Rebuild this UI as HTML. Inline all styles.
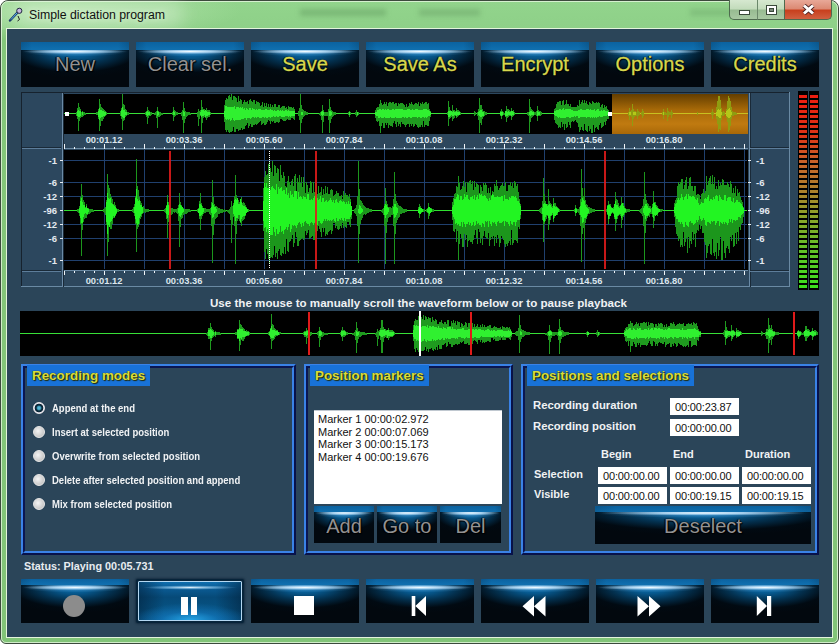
<!DOCTYPE html>
<html><head><meta charset="utf-8">
<style>
*{margin:0;padding:0;box-sizing:border-box}
html,body{width:839px;height:644px;overflow:hidden;background:#fff}
body{position:relative;font-family:"Liberation Sans",sans-serif}
.abs{position:absolute}
#frame{left:0;top:0;width:839px;height:644px;border:1px solid #3c4a3c;border-radius:8px 8px 6px 6px;
 background:radial-gradient(180px 30px at 60px 10px,rgba(190,232,182,.8),rgba(190,232,182,0)),linear-gradient(#92d48c 0,#8ed088 28px,#84c67a 29px,#82c478 100%)}
#frame:before{content:"";position:absolute;left:0;top:0;right:0;bottom:0;border:1px solid rgba(235,250,230,.75);border-radius:7px 7px 5px 5px}
#content{left:7px;top:29px;width:825px;height:608px;background:#2b4559;outline:1px solid #e4f4dc}
#title{left:29px;top:7.5px;font-size:12.3px;color:#111;white-space:nowrap;text-shadow:0 0 6px rgba(230,255,225,.9)}
.wb{top:0;height:20px;border:1px solid #4e6a4e;border-top:none}
#bmin{left:729px;width:29px;border-radius:0 0 0 5px;background:linear-gradient(#d6e8d0 0%,#c3dcbc 45%,#98bc92 55%,#a8c8a2 100%)}
#bmax{left:757px;width:28px;border-left:1px solid #6a886a;background:linear-gradient(#d6e8d0 0%,#c3dcbc 45%,#98bc92 55%,#a8c8a2 100%)}
#bclose{left:784px;width:48px;border-radius:0 0 5px 0;background:linear-gradient(#e8a898 0%,#dc8a74 45%,#c8401e 55%,#d06040 100%)}
.btn{position:absolute;overflow:hidden;--hy:10px;--bh:8px;
 background:
  radial-gradient(48% 2.6px at 50% var(--hy), rgba(240,250,255,1) 0%, rgba(190,225,250,.85) 40%, rgba(60,140,210,0) 100%),
  radial-gradient(50% 5px at 50% var(--hy), rgba(120,190,240,.55) 0%, rgba(40,130,200,0) 100%),
  radial-gradient(72% 58% at 50% var(--hy), #0b70b0 0%, #075a90 22%, #03304e 50%, #010a12 80%, #02080e 100%);
 }
.btn:before{content:"";position:absolute;left:0;right:0;top:0;height:var(--bh,8px);background:linear-gradient(90deg,rgba(0,10,20,.15),rgba(0,0,0,0) 10%,rgba(0,0,0,0) 90%,rgba(0,10,20,.15)),linear-gradient(#0b62a0,#1070b0)}
.btn span{position:absolute;left:0;right:0;text-align:center;font-size:20px;color:#929292;text-shadow:0 0 1px #000,1px 1px 1px #000,-1px 0 1px #000}
.btn span.y{color:#d6d84e;-webkit-text-stroke:.3px #d6d84e}
.tb{top:42px;width:108px;height:45px;--hy:9.5px;--bh:7.5px}
.tb span{top:53px}
svg text{font-family:"Liberation Sans",sans-serif}
.grp{position:absolute;border:2px solid;border-color:#3a82e6 #08124a #08124a #3a82e6}
.grp:before{content:"";position:absolute;left:0;top:0;right:0;bottom:0;border:2px solid;border-color:#0a1652 #3a82e6 #3a82e6 #0a1652}
.gt{position:absolute;background:#1872d8;color:#d8dc3c;font-weight:bold;font-size:13.4px;white-space:nowrap;padding:3px 5px 0 5px;text-shadow:1px 1px 1px #202800,0 0 1px #303000}
.lbl{position:absolute;color:#f0f2f4;font-weight:bold;font-size:11px;white-space:nowrap}
.radio{position:absolute;width:12px;height:12px;border-radius:50%;background:radial-gradient(circle at 40% 40%,#f4f4f4,#c8c8c8 70%,#b0b0b0);border:1px solid #e8e8e8}
.radio.on{background:radial-gradient(circle at 50% 50%,#6ac8e0 0,#3898b8 1.8px,#0c2c3c 2.8px,#0a2636 4px,#ece6f2 4.7px)}
.tx{position:absolute;background:#fff;color:#111;font-size:11px;height:17px;width:69px;padding:3px 0 0 5px;white-space:nowrap;letter-spacing:-.15px}
</style></head><body>
<div id="frame" class="abs"></div>
<div class="abs" style="left:14px;top:1px;width:170px;height:26px;border-radius:13px;background:rgba(215,240,210,.45);filter:blur(8px)"></div>
<div class="abs" style="left:300px;top:9px;width:86px;height:7px;background:rgba(70,120,70,.28);filter:blur(2.5px)"></div>
<div class="abs" style="left:419px;top:9px;width:61px;height:7px;background:rgba(70,120,70,.25);filter:blur(2.5px)"></div>
<div class="abs" style="left:690px;top:9px;width:58px;height:7px;background:rgba(70,120,70,.2);filter:blur(2.5px)"></div>
<svg class="abs" style="left:8px;top:7px" width="16" height="16" viewBox="0 0 16 16">
 <path d="M2 13.5 L9.5 5.5" stroke="#1a3a6a" stroke-width="2.4" stroke-linecap="round"/>
 <path d="M3 12.5 L9 6" stroke="#58b0e8" stroke-width="1"/>
 <circle cx="11.3" cy="3.8" r="2.6" fill="#c8b8e0" stroke="#202840" stroke-width="1"/>
 <path d="M10 9 l1.5 3.5 l-2 1.5" stroke="#202020" stroke-width="1" fill="none"/>
</svg>
<div id="title" class="abs">Simple dictation program</div>
<div id="bmin" class="abs wb"><div class="abs" style="left:9px;top:10px;width:11px;height:5px;background:#fff;border:1px solid #3a4a3a"></div></div>
<div id="bmax" class="abs wb"><div class="abs" style="left:8px;top:5px;width:11px;height:10px;background:#fff;border:1px solid #3a4a3a"><div class="abs" style="left:2px;top:2px;width:5px;height:4px;background:#7a8a7a;border:1px solid #3a4a3a"></div></div></div>
<div id="bclose" class="abs wb"><svg class="abs" style="left:17px;top:4px" width="13" height="11" viewBox="0 0 13 11"><path d="M2 1.5L11 9.5M11 1.5L2 9.5" stroke="#4a2020" stroke-width="4.6"/><path d="M2 1.5L11 9.5M11 1.5L2 9.5" stroke="#fff" stroke-width="3"/></svg></div>

<div id="content" class="abs"></div>

<!-- top buttons -->
<div class="btn tb" style="left:21px"><span style="top:10.8px">New</span></div>
<div class="btn tb" style="left:136px"><span style="top:10.8px">Clear sel.</span></div>
<div class="btn tb" style="left:251px"><span class="y" style="top:10.8px">Save</span></div>
<div class="btn tb" style="left:366px"><span class="y" style="top:10.8px">Save As</span></div>
<div class="btn tb" style="left:481px"><span class="y" style="top:10.8px">Encrypt</span></div>
<div class="btn tb" style="left:596px"><span class="y" style="top:10.8px">Options</span></div>
<div class="btn tb" style="left:711px"><span class="y" style="top:10.8px">Credits</span></div>

<svg class="abs" style="left:0;top:0" width="839" height="644" viewBox="0 0 839 644" shape-rendering="crispEdges">
 <!-- waveform panel frame -->
 <rect x="21" y="92" width="769" height="195" fill="#2c475e"/>
 <path d="M21 92.5H790M21.5 92V287" stroke="#16222e" stroke-width="1"/>
 <path d="M21 286.5H790M789.5 92V287" stroke="#6a8aa4" stroke-width="1"/>
 <path d="M62.5 93V287M749.5 93V287" stroke="#6a8aa6" stroke-width="1"/><path d="M63.5 93V287M750.5 93V287" stroke="#1a2a38" stroke-width="1"/>
 <path d="M22 148.5H61M22 271.5H61M750 148.5H789M750 271.5H789" stroke="#5d7d9a" stroke-width="1"/>
 <path d="M22 147.5H61M22 270.5H61M750 147.5H789M750 270.5H789" stroke="#1a2a38" stroke-width="1"/>
 <!-- overview -->
 <rect x="64" y="94" width="684" height="40" fill="#000"/>
 <path d="M64 113.5H612" stroke="#38e038" stroke-width="1"/>
 <path d="M76.5 112V116M77.5 108V119M78.5 103V131M79.5 107V121M80.5 109V118M81.5 112V117M82.5 111V117M83.5 112V116M84.5 112V115M85.5 113V115M96.5 112V115M97.5 112V115M98.5 109V119M99.5 99V131M100.5 104V126M101.5 107V121M102.5 108V121M103.5 109V119M104.5 110V117M105.5 111V116M106.5 112V115M120.5 111V116M121.5 108V119M122.5 94V130M123.5 104V121M124.5 105V120M125.5 109V117M126.5 110V116M127.5 112V115M128.5 112V115M145.5 112V115M146.5 111V117M147.5 107V124M148.5 110V118M149.5 111V116M150.5 112V116M151.5 112V115M154.5 113V115M155.5 112V115M156.5 111V118M157.5 107V128M158.5 111V117M159.5 112V117M160.5 112V116M161.5 113V115M162.5 113V115M172.5 112V115M173.5 107V121M174.5 110V117M175.5 111V116M176.5 112V115M177.5 112V115M181.5 112V116M182.5 110V120M183.5 102V133M184.5 108V123M185.5 111V119M186.5 112V117M187.5 112V116M188.5 112V115M189.5 112V115M190.5 113V115M197.5 112V117M198.5 109V126M199.5 111V119M200.5 110V116M201.5 100V133M202.5 107V123M203.5 109V118M204.5 109V117M205.5 110V118M206.5 108V120M207.5 110V118M208.5 110V117M209.5 110V117M210.5 112V115M224.5 105V122M225.5 100V130M226.5 98V132M227.5 99V130M228.5 96V132M229.5 95V133M230.5 97V132M231.5 94V132M232.5 100V131M233.5 96V127M234.5 96V132M235.5 97V132M236.5 98V129M237.5 102V129M238.5 96V131M239.5 101V130M240.5 99V130M241.5 100V128M242.5 104V130M243.5 102V129M244.5 100V129M245.5 102V126M246.5 102V125M247.5 101V123M248.5 104V128M249.5 100V126M250.5 99V124M251.5 101V127M252.5 102V127M253.5 100V125M254.5 100V125M255.5 104V124M256.5 101V125M257.5 102V124M258.5 102V123M259.5 103V122M260.5 106V121M261.5 105V125M262.5 102V124M263.5 107V123M264.5 103V125M265.5 106V125M266.5 103V124M267.5 107V122M268.5 104V120M269.5 107V121M270.5 104V124M271.5 107V121M272.5 105V122M273.5 107V121M274.5 104V123M275.5 104V123M276.5 107V122M277.5 107V122M278.5 105V123M279.5 105V122M280.5 108V119M281.5 107V119M282.5 106V120M283.5 106V121M284.5 106V121M285.5 108V121M286.5 107V120M287.5 109V119M288.5 106V120M289.5 107V120M290.5 107V120M291.5 107V118M292.5 108V118M293.5 107V119M294.5 109V120M298.5 111V116M299.5 108V120M300.5 94V133M301.5 105V123M302.5 109V119M303.5 110V117M304.5 111V116M305.5 111V115M306.5 112V115M307.5 112V115M319.5 113V115M320.5 112V116M321.5 111V120M322.5 105V133M323.5 110V122M324.5 112V116M325.5 112V116M326.5 112V116M327.5 112V116M328.5 109V120M329.5 99V133M330.5 107V123M331.5 110V119M332.5 111V117M333.5 112V116M334.5 112V115M335.5 112V115M348.5 112V115M349.5 111V117M350.5 112V115M355.5 112V115M356.5 110V117M357.5 112V116M358.5 112V115M375.5 110V118M376.5 108V121M377.5 107V122M378.5 107V121M379.5 104V126M380.5 100V133M381.5 103V126M382.5 105V123M383.5 104V128M384.5 102V128M385.5 104V123M386.5 102V125M387.5 106V123M388.5 103V128M389.5 102V125M390.5 102V126M391.5 103V126M392.5 102V127M393.5 102V123M394.5 104V121M395.5 103V124M396.5 103V127M397.5 106V122M398.5 103V126M399.5 104V124M400.5 103V127M401.5 103V122M402.5 103V124M403.5 104V124M404.5 105V125M405.5 107V127M406.5 104V125M407.5 107V124M408.5 106V124M409.5 103V127M410.5 104V124M411.5 102V126M412.5 104V124M413.5 105V127M414.5 104V126M415.5 103V124M416.5 103V125M417.5 104V127M418.5 102V128M419.5 106V127M420.5 103V127M421.5 104V125M422.5 102V127M423.5 104V121M424.5 103V127M425.5 102V125M426.5 102V125M427.5 104V126M428.5 103V126M429.5 109V121M430.5 111V117M447.5 112V115M448.5 101V126M449.5 107V119M450.5 110V118M451.5 111V117M452.5 105V121M453.5 110V119M454.5 110V118M455.5 111V116M456.5 108V118M457.5 110V117M458.5 110V116M459.5 111V115M460.5 112V115M474.5 111V116M475.5 112V115M477.5 112V116M478.5 109V120M479.5 98V133M480.5 105V123M481.5 105V125M482.5 109V119M483.5 111V117M484.5 111V116M485.5 112V115M486.5 112V115M500.5 111V116M501.5 109V119M502.5 111V116M503.5 112V115M504.5 113V115M505.5 111V117M506.5 106V122M507.5 109V118M508.5 109V117M509.5 110V116M510.5 111V116M511.5 108V120M512.5 111V117M513.5 110V116M514.5 112V115M527.5 112V115M528.5 112V116M529.5 99V133M530.5 107V122M531.5 109V118M532.5 110V117M533.5 111V116M534.5 112V115M535.5 112V115M536.5 111V116M537.5 106V121M538.5 110V116M539.5 111V116M540.5 111V116M541.5 112V115M554.5 109V120M555.5 108V123M556.5 104V124M557.5 102V125M558.5 102V128M559.5 101V127M560.5 101V128M561.5 105V122M562.5 101V127M563.5 100V124M564.5 105V130M565.5 104V124M566.5 100V128M567.5 104V127M568.5 104V122M569.5 106V125M570.5 104V128M571.5 107V122M572.5 107V121M573.5 107V122M574.5 107V121M575.5 107V120M576.5 107V122M577.5 105V123M578.5 106V127M579.5 100V132M580.5 104V130M581.5 102V127M582.5 100V130M583.5 103V131M584.5 100V124M585.5 103V130M586.5 101V131M587.5 104V132M588.5 105V126M589.5 102V131M590.5 103V129M591.5 104V133M592.5 101V133M593.5 102V125M594.5 103V132M595.5 103V128M596.5 102V127M597.5 103V129M598.5 102V130M599.5 103V125M600.5 107V123M601.5 105V128M602.5 104V127M603.5 108V126M604.5 105V122M605.5 107V125M606.5 106V121M607.5 109V119M608.5 110V119M609.5 112V116" stroke="#1f9a1f" stroke-width="1"/>
 <path d="M77.5 111V116M78.5 110V117M79.5 111V117M80.5 111V116M82.5 112V115M98.5 111V117M99.5 108V120M100.5 110V118M101.5 110V117M102.5 111V117M103.5 111V116M104.5 112V116M105.5 112V115M121.5 110V116M122.5 107V117M123.5 110V118M124.5 110V118M125.5 112V115M126.5 112V115M146.5 112V115M147.5 111V116M148.5 112V115M149.5 112V115M157.5 111V116M158.5 112V115M173.5 111V115M174.5 112V115M183.5 111V116M184.5 112V116M200.5 112V115M201.5 110V117M202.5 110V116M203.5 110V116M204.5 111V115M205.5 110V117M206.5 111V116M207.5 112V116M208.5 112V115M209.5 112V115M224.5 111V117M225.5 106V119M226.5 106V120M227.5 107V119M228.5 107V120M229.5 107V119M230.5 107V121M231.5 107V120M232.5 107V118M233.5 107V120M234.5 106V121M235.5 109V120M236.5 107V120M237.5 107V120M238.5 107V120M239.5 108V120M240.5 107V120M241.5 108V119M242.5 107V119M243.5 109V119M244.5 108V118M245.5 110V118M246.5 108V120M247.5 109V118M248.5 110V118M249.5 108V118M250.5 108V119M251.5 110V118M252.5 108V117M253.5 109V117M254.5 109V118M255.5 110V117M256.5 109V118M257.5 110V117M258.5 109V117M259.5 109V118M260.5 109V118M261.5 110V118M262.5 110V117M263.5 110V117M264.5 110V118M265.5 109V117M266.5 109V118M267.5 110V118M268.5 110V117M269.5 110V117M270.5 109V118M271.5 110V117M272.5 110V117M273.5 111V116M274.5 110V117M275.5 111V117M276.5 111V116M277.5 110V117M278.5 110V117M279.5 111V116M280.5 110V116M281.5 111V117M282.5 110V117M283.5 111V117M284.5 111V117M285.5 110V116M286.5 110V116M287.5 111V116M288.5 110V117M289.5 111V116M290.5 111V117M291.5 111V116M292.5 111V116M293.5 111V116M294.5 111V116M301.5 112V115M302.5 112V115M321.5 112V115M322.5 111V116M323.5 112V115M329.5 111V116M330.5 111V116M331.5 112V115M349.5 112V115M357.5 112V115M375.5 112V115M376.5 112V116M377.5 110V116M378.5 110V118M379.5 109V118M380.5 109V117M381.5 110V118M382.5 109V118M383.5 109V118M384.5 110V117M385.5 109V118M386.5 110V118M387.5 109V118M388.5 109V118M389.5 110V118M390.5 110V117M391.5 110V118M392.5 109V118M393.5 109V118M394.5 110V118M395.5 109V117M396.5 109V118M397.5 109V118M398.5 109V118M399.5 109V118M400.5 109V118M401.5 109V118M402.5 109V117M403.5 110V117M404.5 110V118M405.5 110V117M406.5 110V118M407.5 109V118M408.5 109V117M409.5 109V117M410.5 110V118M411.5 110V118M412.5 109V117M413.5 110V117M414.5 110V117M415.5 109V117M416.5 109V117M417.5 109V118M418.5 110V117M419.5 110V117M420.5 110V118M421.5 110V118M422.5 110V117M423.5 109V117M424.5 109V118M425.5 109V117M426.5 109V118M427.5 110V117M428.5 110V116M429.5 111V116M430.5 112V115M448.5 111V117M449.5 111V117M450.5 111V116M451.5 111V115M452.5 112V116M453.5 111V116M454.5 112V115M455.5 112V115M456.5 111V116M457.5 112V115M458.5 112V115M459.5 112V115M478.5 112V115M479.5 111V116M480.5 110V117M481.5 110V117M482.5 112V116M483.5 112V116M500.5 112V115M501.5 112V116M502.5 112V115M505.5 111V116M506.5 111V116M507.5 112V116M508.5 111V115M509.5 112V115M510.5 112V115M511.5 111V116M512.5 111V115M513.5 112V115M529.5 112V115M530.5 111V116M531.5 111V115M532.5 112V115M533.5 112V115M537.5 111V116M538.5 112V115M539.5 112V115M554.5 111V115M555.5 111V116M556.5 110V116M557.5 110V117M558.5 110V118M559.5 109V117M560.5 109V118M561.5 110V118M562.5 109V118M563.5 108V118M564.5 110V118M565.5 109V118M566.5 109V117M567.5 109V117M568.5 109V117M569.5 109V118M570.5 109V118M571.5 110V117M572.5 110V117M573.5 111V117M574.5 111V116M575.5 111V117M576.5 111V116M577.5 111V116M578.5 110V118M579.5 110V118M580.5 109V117M581.5 109V117M582.5 110V117M583.5 110V117M584.5 110V117M585.5 110V117M586.5 109V118M587.5 109V117M588.5 109V117M589.5 110V117M590.5 109V118M591.5 110V117M592.5 110V118M593.5 110V117M594.5 109V118M595.5 111V117M596.5 110V118M597.5 109V117M598.5 109V117M599.5 111V116M600.5 111V117M601.5 110V117M602.5 111V117M603.5 110V116M604.5 110V116M605.5 111V116M606.5 111V116M607.5 111V115M608.5 112V115" stroke="#30f030" stroke-width="1"/>
 <defs><linearGradient id="og" x1="0" y1="0" x2="0" y2="1">
  <stop offset="0" stop-color="#633e00"/>
  <stop offset=".4" stop-color="#a86a08"/>
  <stop offset=".75" stop-color="#c07a10"/>
  <stop offset="1" stop-color="#a86808"/></linearGradient></defs>
 <rect x="612" y="94" width="136" height="40" fill="url(#og)"/>
 <path d="M612 113.5H748" stroke="#c8c020" stroke-width="1"/>
 <path d="M628.5 112V116M629.5 108V120M630.5 111V116M631.5 110V117M632.5 104V126M633.5 109V119M634.5 111V117M635.5 111V116M636.5 112V116M637.5 109V119M638.5 111V116M639.5 112V115M641.5 112V115M642.5 109V118M643.5 111V116M662.5 112V115M663.5 109V119M664.5 112V115M665.5 112V115M666.5 113V115M667.5 108V121M668.5 111V117M669.5 112V115M670.5 112V115M671.5 110V118M672.5 112V115M697.5 112V115M711.5 112V115M712.5 109V119M713.5 112V115M716.5 107V119M717.5 101V124M718.5 96V132M719.5 96V129M720.5 100V130M721.5 108V120M722.5 112V116M723.5 111V116M724.5 112V115M726.5 109V118M727.5 101V122M728.5 96V132M729.5 98V130M730.5 101V126M731.5 107V119M732.5 111V116M733.5 112V116M734.5 112V115M735.5 112V115M736.5 113V115" stroke="#909c10" stroke-width="1"/>
 <path d="M629.5 112V115M630.5 112V115M633.5 112V115M634.5 112V115M635.5 112V115M663.5 112V115M716.5 112V116M717.5 110V116M718.5 109V117M719.5 110V118M720.5 109V118M721.5 112V115M726.5 111V116M727.5 110V117M728.5 109V118M729.5 108V118M730.5 110V117M731.5 112V115" stroke="#b4c818" stroke-width="1"/>
 <rect x="65" y="112" width="4" height="4" fill="#fff"/>
 <rect x="608" y="112" width="4" height="4" fill="#fff"/>
 <!-- rulers -->
 <rect x="64" y="134" width="684" height="15" fill="#2d475d"/>
 <rect x="64" y="270" width="684" height="16" fill="#2d475d"/>
 <path d="M64 148.5H748" stroke="#6a8aa4" stroke-width="1"/>
 <path d="M64.5 149v-5M74.5 149v-2.5M84.5 149v-2.5M94.5 149v-2.5M104.5 149v-5M114.5 149v-2.5M124.5 149v-2.5M134.5 149v-2.5M144.5 149v-5M154.5 149v-2.5M164.5 149v-2.5M174.5 149v-2.5M184.5 149v-5M194.5 149v-2.5M204.5 149v-2.5M214.5 149v-2.5M224.5 149v-5M234.5 149v-2.5M244.5 149v-2.5M254.5 149v-2.5M264.5 149v-5M274.5 149v-2.5M284.5 149v-2.5M294.5 149v-2.5M304.5 149v-5M314.5 149v-2.5M324.5 149v-2.5M334.5 149v-2.5M344.5 149v-5M354.5 149v-2.5M364.5 149v-2.5M374.5 149v-2.5M384.5 149v-5M394.5 149v-2.5M404.5 149v-2.5M414.5 149v-2.5M424.5 149v-5M434.5 149v-2.5M444.5 149v-2.5M454.5 149v-2.5M464.5 149v-5M474.5 149v-2.5M484.5 149v-2.5M494.5 149v-2.5M504.5 149v-5M514.5 149v-2.5M524.5 149v-2.5M534.5 149v-2.5M544.5 149v-5M554.5 149v-2.5M564.5 149v-2.5M574.5 149v-2.5M584.5 149v-5M594.5 149v-2.5M604.5 149v-2.5M614.5 149v-2.5M624.5 149v-5M634.5 149v-2.5M644.5 149v-2.5M654.5 149v-2.5M664.5 149v-5M674.5 149v-2.5M684.5 149v-2.5M694.5 149v-2.5M704.5 149v-5M714.5 149v-2.5M724.5 149v-2.5M734.5 149v-2.5M744.5 149v-5M64.5 271v4M74.5 271v2M84.5 271v2M94.5 271v2M104.5 271v4M114.5 271v2M124.5 271v2M134.5 271v2M144.5 271v4M154.5 271v2M164.5 271v2M174.5 271v2M184.5 271v4M194.5 271v2M204.5 271v2M214.5 271v2M224.5 271v4M234.5 271v2M244.5 271v2M254.5 271v2M264.5 271v4M274.5 271v2M284.5 271v2M294.5 271v2M304.5 271v4M314.5 271v2M324.5 271v2M334.5 271v2M344.5 271v4M354.5 271v2M364.5 271v2M374.5 271v2M384.5 271v4M394.5 271v2M404.5 271v2M414.5 271v2M424.5 271v4M434.5 271v2M444.5 271v2M454.5 271v2M464.5 271v4M474.5 271v2M484.5 271v2M494.5 271v2M504.5 271v4M514.5 271v2M524.5 271v2M534.5 271v2M544.5 271v4M554.5 271v2M564.5 271v2M574.5 271v2M584.5 271v4M594.5 271v2M604.5 271v2M614.5 271v2M624.5 271v4M634.5 271v2M644.5 271v2M654.5 271v2M664.5 271v4M674.5 271v2M684.5 271v2M694.5 271v2M704.5 271v4M714.5 271v2M724.5 271v2M734.5 271v2M744.5 271v4" stroke="#f0f4f8" stroke-width="1"/>
 <g font-size="9.3" font-weight="bold" fill="#dde6ee" shape-rendering="auto"><text x="104" y="143" text-anchor="middle">00:01.12</text><text x="104" y="284" text-anchor="middle">00:01.12</text><text x="184" y="143" text-anchor="middle">00:03.36</text><text x="184" y="284" text-anchor="middle">00:03.36</text><text x="264" y="143" text-anchor="middle">00:05.60</text><text x="264" y="284" text-anchor="middle">00:05.60</text><text x="344" y="143" text-anchor="middle">00:07.84</text><text x="344" y="284" text-anchor="middle">00:07.84</text><text x="424" y="143" text-anchor="middle">00:10.08</text><text x="424" y="284" text-anchor="middle">00:10.08</text><text x="504" y="143" text-anchor="middle">00:12.32</text><text x="504" y="284" text-anchor="middle">00:12.32</text><text x="584" y="143" text-anchor="middle">00:14.56</text><text x="584" y="284" text-anchor="middle">00:14.56</text><text x="664" y="143" text-anchor="middle">00:16.80</text><text x="664" y="284" text-anchor="middle">00:16.80</text></g>
 <!-- main waveform -->
 <rect x="64" y="150" width="684" height="120" fill="#000"/>
 <path d="M64 270.5H748" stroke="#6a8aa4" stroke-width="1"/>
 <path d="M64 160.5H747M64 182.5H747M64 196.5H747M64 210.5H747M64 224.5H747M64 238.5H747M64 260.5H747M104.5 150V269M144.5 150V269M184.5 150V269M224.5 150V269M264.5 150V269M304.5 150V269M344.5 150V269M384.5 150V269M424.5 150V269M464.5 150V269M504.5 150V269M544.5 150V269M584.5 150V269M624.5 150V269M664.5 150V269M704.5 150V269M744.5 150V269" stroke="#20406e" stroke-width="1"/>
 <path d="M64 210.5H747" stroke="#30e030" stroke-width="1.6"/>
 <path d="M77.5 209V212M78.5 209V213M79.5 206V216M80.5 197V224M81.5 184V256M82.5 195V230M83.5 200V222M84.5 202V219M85.5 207V218M86.5 204V218M87.5 208V215M88.5 208V214M89.5 209V214M90.5 209V213M91.5 209V212M92.5 209V212M93.5 210V212M103.5 209V212M104.5 208V213M105.5 207V215M106.5 200V225M107.5 174V256M108.5 185V242M109.5 188V227M110.5 194V229M111.5 197V229M112.5 199V224M113.5 204V218M114.5 202V218M115.5 205V216M116.5 208V214M117.5 209V212M118.5 209V212M132.5 209V212M133.5 207V213M134.5 204V216M135.5 196V224M136.5 159V252M137.5 186V229M138.5 190V227M139.5 197V224M140.5 201V219M141.5 203V217M142.5 207V214M143.5 206V213M144.5 208V212M145.5 209V213M146.5 209V212M147.5 209V212M148.5 209V212M164.5 209V212M165.5 208V213M166.5 205V219M167.5 195V238M168.5 202V222M169.5 205V218M170.5 208V215M171.5 208V215M172.5 208V214M173.5 209V212M174.5 209V213M175.5 209V212M176.5 209V213M177.5 208V214M178.5 205V221M179.5 193V247M180.5 202V227M181.5 205V219M182.5 208V218M183.5 208V215M184.5 209V214M185.5 209V214M186.5 209V214M187.5 209V213M188.5 209V212M189.5 209V212M190.5 210V212M197.5 209V212M198.5 208V213M199.5 201V219M200.5 193V230M201.5 203V219M202.5 206V216M203.5 208V214M204.5 208V213M205.5 208V213M206.5 209V212M207.5 209V212M208.5 209V212M209.5 209V214M210.5 208V215M211.5 202V226M212.5 180V263M213.5 197V235M214.5 204V224M215.5 206V219M216.5 206V218M217.5 207V217M218.5 208V214M219.5 208V214M220.5 209V213M221.5 209V213M222.5 209V213M223.5 210V212M224.5 209V212M225.5 210V212M227.5 210V212M228.5 210V213M229.5 209V214M230.5 207V220M231.5 201V243M232.5 206V225M233.5 203V217M234.5 196V226M235.5 175V264M236.5 195V234M237.5 200V221M238.5 200V219M239.5 202V221M240.5 201V223M241.5 197V226M242.5 203V221M243.5 202V220M244.5 203V219M245.5 205V216M246.5 207V213M247.5 209V212M248.5 209V212M263.5 188V231M264.5 177V252M265.5 171V259M266.5 175V249M267.5 174V254M268.5 164V259M269.5 162V264M270.5 168V258M271.5 172V257M272.5 161V258M273.5 176V255M274.5 165V246M275.5 166V257M276.5 173V253M277.5 168V259M278.5 169V251M279.5 181V249M280.5 165V255M281.5 175V256M282.5 178V253M283.5 172V254M284.5 176V247M285.5 186V254M286.5 187V239M287.5 181V251M288.5 176V252M289.5 182V242M290.5 185V241M291.5 181V239M292.5 179V235M293.5 186V247M294.5 176V243M295.5 174V232M296.5 192V237M297.5 178V246M298.5 182V246M299.5 175V241M300.5 183V240M301.5 177V239M302.5 187V238M303.5 177V240M304.5 182V239M305.5 193V231M306.5 182V235M307.5 185V233M308.5 192V230M309.5 188V239M310.5 181V238M311.5 182V237M312.5 193V236M313.5 182V240M314.5 192V240M315.5 183V232M316.5 183V238M317.5 194V231M318.5 186V226M319.5 193V229M320.5 192V232M321.5 187V237M322.5 195V228M323.5 189V232M324.5 194V228M325.5 186V236M326.5 193V234M327.5 187V235M328.5 194V232M329.5 194V231M330.5 190V230M331.5 189V234M332.5 190V231M333.5 196V223M334.5 195V223M335.5 194V228M336.5 191V226M337.5 193V229M338.5 193V230M339.5 196V229M340.5 196V226M341.5 195V228M342.5 199V223M343.5 191V228M344.5 195V226M345.5 193V227M346.5 195V228M347.5 195V222M348.5 197V222M349.5 194V225M350.5 199V227M351.5 206V219M354.5 209V213M355.5 208V214M356.5 205V216M357.5 196V226M358.5 161V263M359.5 189V234M360.5 200V224M361.5 201V220M362.5 203V218M363.5 205V215M364.5 206V214M365.5 207V215M366.5 208V214M367.5 208V213M368.5 208V213M369.5 209V212M370.5 209V212M371.5 209V212M381.5 210V212M382.5 209V213M383.5 208V215M384.5 204V226M385.5 188V264M386.5 201V233M387.5 204V222M388.5 207V218M389.5 207V217M390.5 207V217M391.5 208V215M392.5 206V215M393.5 199V226M394.5 172V264M395.5 194V234M396.5 201V223M397.5 203V220M398.5 205V218M399.5 206V217M400.5 206V214M401.5 207V214M402.5 208V213M403.5 209V213M404.5 209V213M405.5 209V212M406.5 209V212M418.5 207V213M419.5 204V218M420.5 206V214M421.5 208V213M422.5 209V212M423.5 209V212M424.5 209V212M426.5 209V212M427.5 208V213M428.5 203V219M429.5 207V216M430.5 208V213M431.5 208V212M432.5 209V212M433.5 209V212M452.5 202V220M453.5 198V231M454.5 194V232M455.5 193V229M456.5 186V242M457.5 187V231M458.5 176V260M459.5 183V244M460.5 190V234M461.5 189V238M462.5 186V247M463.5 181V247M464.5 187V234M465.5 182V240M466.5 192V235M467.5 182V247M468.5 183V241M469.5 181V240M470.5 180V242M471.5 184V242M472.5 181V244M473.5 190V240M474.5 181V235M475.5 187V230M476.5 183V238M477.5 184V244M478.5 185V229M479.5 193V232M480.5 185V243M481.5 187V238M482.5 191V245M483.5 183V236M484.5 185V231M485.5 183V237M486.5 185V238M487.5 193V239M488.5 188V233M489.5 193V246M490.5 187V240M491.5 195V237M492.5 191V239M493.5 192V236M494.5 184V246M495.5 186V237M496.5 180V243M497.5 186V235M498.5 190V238M499.5 188V247M500.5 186V243M501.5 185V236M502.5 183V238M503.5 186V240M504.5 186V244M505.5 182V247M506.5 191V244M507.5 191V246M508.5 185V243M509.5 185V241M510.5 182V245M511.5 186V230M512.5 183V245M513.5 188V243M514.5 181V240M515.5 182V240M516.5 186V241M517.5 184V243M518.5 192V227M519.5 199V229M520.5 204V219M539.5 209V212M540.5 208V213M541.5 207V214M542.5 201V220M543.5 178V242M544.5 194V224M545.5 201V221M546.5 205V219M547.5 204V216M548.5 189V230M549.5 201V224M550.5 203V220M551.5 204V216M552.5 206V215M553.5 198V222M554.5 203V218M555.5 203V216M556.5 206V215M557.5 207V215M558.5 208V212M559.5 209V212M574.5 209V212M575.5 205V216M576.5 208V213M577.5 209V212M578.5 209V213M579.5 207V215M580.5 199V226M581.5 169V262M582.5 188V234M583.5 196V228M584.5 188V240M585.5 200V223M586.5 204V219M587.5 205V216M588.5 207V214M589.5 207V214M590.5 208V213M591.5 208V213M592.5 209V212M593.5 209V212M594.5 209V212M606.5 209V212M607.5 205V215M608.5 201V224M609.5 204V219M610.5 204V216M611.5 207V214M612.5 209V213M613.5 207V214M614.5 204V219M615.5 192V231M616.5 199V223M617.5 200V219M618.5 203V216M619.5 206V215M620.5 205V216M621.5 197V228M622.5 205V220M623.5 203V217M624.5 206V215M625.5 208V213M626.5 209V213M627.5 209V212M628.5 209V212M629.5 209V212M639.5 210V212M640.5 209V213M641.5 208V214M642.5 206V216M643.5 199V226M644.5 172V264M645.5 194V233M646.5 200V221M647.5 203V218M648.5 204V216M649.5 206V217M650.5 206V214M651.5 208V214M652.5 204V217M653.5 191V228M654.5 202V221M655.5 202V215M656.5 205V215M657.5 206V216M658.5 208V213M659.5 209V212M660.5 209V212M661.5 209V212M662.5 209V211M674.5 203V217M675.5 200V227M676.5 198V234M677.5 186V236M678.5 182V241M679.5 184V239M680.5 182V247M681.5 179V245M682.5 179V247M683.5 189V232M684.5 185V246M685.5 180V242M686.5 177V238M687.5 189V253M688.5 186V237M689.5 178V248M690.5 177V241M691.5 186V244M692.5 186V232M693.5 191V240M694.5 186V234M695.5 186V247M696.5 195V233M697.5 194V230M698.5 194V231M699.5 195V224M700.5 199V229M701.5 194V226M702.5 193V233M703.5 189V233M704.5 193V242M705.5 191V245M706.5 176V258M707.5 185V253M708.5 181V246M709.5 178V244M710.5 176V254M711.5 184V255M712.5 175V239M713.5 184V253M714.5 177V256M715.5 189V252M716.5 186V259M717.5 189V243M718.5 180V256M719.5 186V250M720.5 183V237M721.5 185V260M722.5 179V260M723.5 180V241M724.5 185V253M725.5 185V258M726.5 185V248M727.5 182V246M728.5 184V249M729.5 187V253M730.5 181V237M731.5 184V241M732.5 193V235M733.5 188V247M734.5 193V246M735.5 186V233M736.5 196V244M737.5 189V232M738.5 193V241M739.5 192V227M740.5 197V230M741.5 200V224M742.5 202V223M743.5 207V217" stroke="#1c961c" stroke-width="1"/>
 <path d="M79.5 208V213M80.5 201V218M81.5 198V223M82.5 202V223M83.5 205V217M84.5 205V214M85.5 208V213M86.5 206V214M87.5 208V214M88.5 209V212M106.5 202V222M107.5 193V234M108.5 198V225M109.5 199V227M110.5 198V222M111.5 203V221M112.5 204V219M113.5 205V216M114.5 206V217M115.5 207V215M116.5 209V213M134.5 207V213M135.5 198V219M136.5 189V223M137.5 199V225M138.5 201V224M139.5 200V218M140.5 205V216M141.5 205V214M142.5 207V213M166.5 206V214M167.5 202V218M168.5 205V215M169.5 206V213M170.5 209V212M178.5 208V213M179.5 204V216M180.5 205V217M181.5 206V215M182.5 207V213M183.5 209V212M198.5 209V213M199.5 204V216M200.5 204V216M201.5 205V215M202.5 208V214M203.5 208V212M211.5 207V213M212.5 203V218M213.5 205V217M214.5 207V214M215.5 207V213M216.5 209V212M233.5 205V214M234.5 200V216M235.5 199V221M236.5 200V218M237.5 198V218M238.5 204V215M239.5 204V215M240.5 199V222M241.5 202V219M242.5 205V217M243.5 206V216M244.5 206V216M245.5 207V215M246.5 208V213M247.5 209V212M263.5 201V221M264.5 183V228M265.5 187V227M266.5 183V232M267.5 188V229M268.5 188V233M269.5 187V228M270.5 190V235M271.5 187V235M272.5 186V235M273.5 188V227M274.5 189V232M275.5 190V236M276.5 184V229M277.5 194V234M278.5 187V234M279.5 189V232M280.5 188V226M281.5 187V232M282.5 191V231M283.5 190V234M284.5 190V230M285.5 194V229M286.5 188V227M287.5 195V230M288.5 193V227M289.5 198V224M290.5 191V232M291.5 195V229M292.5 194V225M293.5 197V226M294.5 191V225M295.5 191V226M296.5 191V228M297.5 199V225M298.5 192V223M299.5 197V222M300.5 196V224M301.5 197V227M302.5 199V223M303.5 196V226M304.5 197V222M305.5 197V221M306.5 199V223M307.5 194V224M308.5 194V224M309.5 200V226M310.5 200V223M311.5 199V222M312.5 200V223M313.5 198V225M314.5 196V223M315.5 195V222M316.5 196V224M317.5 198V225M318.5 200V221M319.5 199V221M320.5 196V223M321.5 202V224M322.5 198V223M323.5 198V221M324.5 202V219M325.5 201V221M326.5 200V219M327.5 202V221M328.5 201V220M329.5 200V221M330.5 198V220M331.5 200V221M332.5 202V220M333.5 200V219M334.5 203V221M335.5 200V222M336.5 199V218M337.5 202V221M338.5 203V221M339.5 201V219M340.5 200V220M341.5 201V218M342.5 202V220M343.5 201V221M344.5 202V218M345.5 204V221M346.5 202V219M347.5 204V219M348.5 201V219M349.5 204V219M350.5 202V217M351.5 206V215M358.5 209V213M359.5 205V214M360.5 206V214M361.5 208V213M362.5 209V212M384.5 206V215M385.5 204V218M386.5 205V215M387.5 207V214M388.5 208V212M393.5 207V214M394.5 204V218M395.5 204V217M396.5 207V215M397.5 208V213M418.5 209V213M419.5 207V214M420.5 208V214M421.5 208V212M422.5 209V212M427.5 209V212M428.5 207V213M429.5 207V214M430.5 208V213M431.5 209V212M452.5 207V214M453.5 205V217M454.5 199V219M455.5 199V224M456.5 197V223M457.5 194V225M458.5 195V224M459.5 200V226M460.5 196V226M461.5 196V222M462.5 200V227M463.5 199V222M464.5 194V224M465.5 197V227M466.5 195V224M467.5 195V224M468.5 199V222M469.5 200V225M470.5 197V223M471.5 197V226M472.5 196V225M473.5 199V222M474.5 195V226M475.5 200V225M476.5 197V221M477.5 195V224M478.5 199V223M479.5 194V225M480.5 195V225M481.5 194V227M482.5 196V223M483.5 196V224M484.5 195V227M485.5 196V221M486.5 198V222M487.5 199V221M488.5 201V227M489.5 198V221M490.5 200V224M491.5 196V226M492.5 194V222M493.5 195V223M494.5 197V222M495.5 197V224M496.5 197V226M497.5 196V222M498.5 197V221M499.5 197V223M500.5 197V223M501.5 196V223M502.5 196V222M503.5 201V221M504.5 195V226M505.5 199V221M506.5 199V222M507.5 199V222M508.5 200V224M509.5 197V226M510.5 198V221M511.5 196V224M512.5 196V225M513.5 196V222M514.5 197V222M515.5 196V226M516.5 198V222M517.5 201V220M518.5 201V220M519.5 203V220M520.5 206V215M542.5 208V214M543.5 204V221M544.5 203V222M545.5 204V217M546.5 204V215M547.5 206V215M548.5 205V218M549.5 204V220M550.5 205V216M551.5 207V215M552.5 208V213M553.5 204V219M554.5 206V216M555.5 207V216M556.5 207V215M557.5 208V213M558.5 209V212M575.5 208V213M576.5 209V213M580.5 206V215M581.5 202V217M582.5 198V223M583.5 200V222M584.5 201V218M585.5 205V218M586.5 207V217M587.5 208V214M588.5 209V213M607.5 206V214M608.5 205V219M609.5 205V216M610.5 206V216M611.5 208V213M612.5 208V212M613.5 209V213M614.5 204V217M615.5 201V219M616.5 205V219M617.5 205V216M618.5 207V215M619.5 208V214M620.5 206V214M621.5 204V218M622.5 203V216M623.5 206V215M624.5 208V213M625.5 209V212M643.5 208V213M644.5 206V215M645.5 204V219M646.5 204V216M647.5 206V216M648.5 208V215M649.5 208V213M650.5 209V212M652.5 207V214M653.5 203V218M654.5 203V215M655.5 205V216M656.5 207V215M657.5 208V214M658.5 209V212M659.5 209V212M674.5 207V213M675.5 204V216M676.5 203V219M677.5 200V219M678.5 198V222M679.5 200V222M680.5 198V224M681.5 194V222M682.5 197V224M683.5 200V227M684.5 197V227M685.5 196V222M686.5 194V225M687.5 199V226M688.5 194V227M689.5 196V222M690.5 196V221M691.5 197V223M692.5 196V223M693.5 196V225M694.5 197V224M695.5 199V223M696.5 200V220M697.5 198V222M698.5 203V220M699.5 205V216M700.5 204V219M701.5 202V221M702.5 203V220M703.5 203V218M704.5 199V220M705.5 198V225M706.5 199V226M707.5 197V222M708.5 195V222M709.5 201V223M710.5 199V224M711.5 199V221M712.5 200V222M713.5 197V221M714.5 199V221M715.5 196V225M716.5 195V223M717.5 196V221M718.5 201V221M719.5 195V226M720.5 197V222M721.5 199V223M722.5 200V224M723.5 200V222M724.5 195V224M725.5 195V222M726.5 201V223M727.5 198V225M728.5 197V223M729.5 197V219M730.5 197V222M731.5 201V219M732.5 202V223M733.5 198V220M734.5 203V220M735.5 202V221M736.5 200V220M737.5 200V220M738.5 202V217M739.5 202V217M740.5 203V218M741.5 204V215M742.5 206V214M743.5 208V213" stroke="#22f522" stroke-width="1"/>
 <path d="M170 151V269M316 151V269M605 151V269" stroke="#e41c1c" stroke-width="2.6" opacity=".88"/>
 <path d="M269.5 151V269" stroke="#fff" stroke-width="1" stroke-dasharray="1 1"/>
 <path d="M60 160.5h3M748 160.5h3M60 182.5h3M748 182.5h3M60 196.5h3M748 196.5h3M60 210.5h3M748 210.5h3M60 224.5h3M748 224.5h3M60 238.5h3M748 238.5h3M60 260.5h3M748 260.5h3" stroke="#e8eef4" stroke-width="1"/>
 <g font-size="9.5" font-weight="bold" fill="#e4eaf0" shape-rendering="auto"><text x="57" y="163.5" text-anchor="end">-1</text><text x="756" y="163.5">-1</text><text x="57" y="185.5" text-anchor="end">-6</text><text x="756" y="185.5">-6</text><text x="57" y="199.5" text-anchor="end">-12</text><text x="756" y="199.5">-12</text><text x="57" y="213.5" text-anchor="end">-96</text><text x="756" y="213.5">-96</text><text x="57" y="227.5" text-anchor="end">-12</text><text x="756" y="227.5">-12</text><text x="57" y="241.5" text-anchor="end">-6</text><text x="756" y="241.5">-6</text><text x="57" y="263.5" text-anchor="end">-1</text><text x="756" y="263.5">-1</text></g>
 <!-- VU -->
 <rect x="798" y="91" width="10" height="199" fill="#000"/>
 <rect x="809" y="91" width="10" height="199" fill="#000"/>
 <rect x="799" y="95" width="8" height="3" fill="#ec1e10"/><rect x="810" y="95" width="8" height="3" fill="#ec1e10"/><rect x="799" y="100" width="8" height="3" fill="#ea2111"/><rect x="810" y="100" width="8" height="3" fill="#ea2111"/><rect x="799" y="105" width="8" height="3" fill="#e82412"/><rect x="810" y="105" width="8" height="3" fill="#e82412"/><rect x="799" y="110" width="8" height="3" fill="#e62712"/><rect x="810" y="110" width="8" height="3" fill="#e62712"/><rect x="799" y="115" width="8" height="3" fill="#e52a13"/><rect x="810" y="115" width="8" height="3" fill="#e52a13"/><rect x="799" y="120" width="8" height="3" fill="#e32c14"/><rect x="810" y="120" width="8" height="3" fill="#e32c14"/><rect x="799" y="125" width="8" height="3" fill="#e12f15"/><rect x="810" y="125" width="8" height="3" fill="#e12f15"/><rect x="799" y="130" width="8" height="3" fill="#df3216"/><rect x="810" y="130" width="8" height="3" fill="#df3216"/><rect x="799" y="135" width="8" height="3" fill="#dc3717"/><rect x="810" y="135" width="8" height="3" fill="#dc3717"/><rect x="799" y="140" width="8" height="3" fill="#d9401b"/><rect x="810" y="140" width="8" height="3" fill="#d9401b"/><rect x="799" y="145" width="8" height="3" fill="#d5481e"/><rect x="810" y="145" width="8" height="3" fill="#d5481e"/><rect x="799" y="150" width="8" height="3" fill="#d15122"/><rect x="810" y="150" width="8" height="3" fill="#d15122"/><rect x="799" y="155" width="8" height="3" fill="#cd5925"/><rect x="810" y="155" width="8" height="3" fill="#cd5925"/><rect x="799" y="160" width="8" height="3" fill="#c96129"/><rect x="810" y="160" width="8" height="3" fill="#c96129"/><rect x="799" y="165" width="8" height="3" fill="#c5682a"/><rect x="810" y="165" width="8" height="3" fill="#c5682a"/><rect x="799" y="170" width="8" height="3" fill="#c06d2b"/><rect x="810" y="170" width="8" height="3" fill="#c06d2b"/><rect x="799" y="175" width="8" height="3" fill="#bb722b"/><rect x="810" y="175" width="8" height="3" fill="#bb722b"/><rect x="799" y="180" width="8" height="3" fill="#b6772b"/><rect x="810" y="180" width="8" height="3" fill="#b6772b"/><rect x="799" y="185" width="8" height="3" fill="#b17d2c"/><rect x="810" y="185" width="8" height="3" fill="#b17d2c"/><rect x="799" y="190" width="8" height="3" fill="#ac822c"/><rect x="810" y="190" width="8" height="3" fill="#ac822c"/><rect x="799" y="195" width="8" height="3" fill="#a5892c"/><rect x="810" y="195" width="8" height="3" fill="#a5892c"/><rect x="799" y="200" width="8" height="3" fill="#9f8f2b"/><rect x="810" y="200" width="8" height="3" fill="#9f8f2b"/><rect x="799" y="205" width="8" height="3" fill="#98962b"/><rect x="810" y="205" width="8" height="3" fill="#98962b"/><rect x="799" y="210" width="8" height="3" fill="#929c2a"/><rect x="810" y="210" width="8" height="3" fill="#929c2a"/><rect x="799" y="215" width="8" height="3" fill="#8ba22a"/><rect x="810" y="215" width="8" height="3" fill="#8ba22a"/><rect x="799" y="220" width="8" height="3" fill="#85a72a"/><rect x="810" y="220" width="8" height="3" fill="#85a72a"/><rect x="799" y="225" width="8" height="3" fill="#7fab29"/><rect x="810" y="225" width="8" height="3" fill="#7fab29"/><rect x="799" y="230" width="8" height="3" fill="#79b029"/><rect x="810" y="230" width="8" height="3" fill="#79b029"/><rect x="799" y="235" width="8" height="3" fill="#73b529"/><rect x="810" y="235" width="8" height="3" fill="#73b529"/><rect x="799" y="240" width="8" height="3" fill="#6db928"/><rect x="810" y="240" width="8" height="3" fill="#6db928"/><rect x="799" y="245" width="8" height="3" fill="#66be28"/><rect x="810" y="245" width="8" height="3" fill="#66be28"/><rect x="799" y="250" width="8" height="3" fill="#61c227"/><rect x="810" y="250" width="8" height="3" fill="#61c227"/><rect x="799" y="255" width="8" height="3" fill="#5cc626"/><rect x="810" y="255" width="8" height="3" fill="#5cc626"/><rect x="799" y="260" width="8" height="3" fill="#57ca25"/><rect x="810" y="260" width="8" height="3" fill="#57ca25"/><rect x="799" y="265" width="8" height="3" fill="#52ce23"/><rect x="810" y="265" width="8" height="3" fill="#52ce23"/><rect x="799" y="270" width="8" height="3" fill="#4dd222"/><rect x="810" y="270" width="8" height="3" fill="#4dd222"/><rect x="799" y="275" width="8" height="3" fill="#48d621"/><rect x="810" y="275" width="8" height="3" fill="#48d621"/><rect x="799" y="280" width="8" height="3" fill="#43da1f"/><rect x="810" y="280" width="8" height="3" fill="#43da1f"/><rect x="799" y="285" width="8" height="3" fill="#3ede1e"/><rect x="810" y="285" width="8" height="3" fill="#3ede1e"/>
 <!-- bottom strip -->
 <rect x="20" y="311" width="799" height="45" fill="#000"/>
 <path d="M20 333.5H818" stroke="#38e038" stroke-width="1.4"/>
 <path d="M206.5 333V335M207.5 332V336M208.5 328V339M209.5 328V339M210.5 323V350M211.5 327V341M212.5 329V338M213.5 330V337M214.5 332V336M215.5 331V337M216.5 332V335M217.5 332V335M218.5 332V335M219.5 332V335M220.5 333V335M235.5 332V335M236.5 332V335M237.5 329V339M238.5 329V339M239.5 320V351M240.5 324V345M241.5 325V340M242.5 327V341M243.5 328V341M244.5 329V339M245.5 331V337M246.5 330V336M247.5 331V336M248.5 331V336M249.5 332V335M268.5 332V335M269.5 331V336M270.5 328V339M271.5 314V349M272.5 324V341M273.5 325V340M274.5 328V339M275.5 329V337M276.5 330V336M277.5 330V336M278.5 332V335M279.5 332V335M280.5 332V334M303.5 332V335M304.5 331V337M305.5 331V337M306.5 328V344M307.5 330V338M308.5 331V336M309.5 332V336M310.5 332V336M311.5 332V335M317.5 332V335M318.5 331V338M319.5 327V347M320.5 330V340M321.5 331V337M322.5 332V337M323.5 332V336M324.5 333V335M325.5 333V335M326.5 333V335M327.5 333V335M340.5 332V335M341.5 330V337M342.5 327V341M343.5 330V337M344.5 330V337M345.5 331V336M346.5 332V335M347.5 332V335M352.5 333V335M353.5 333V335M354.5 332V336M355.5 330V340M356.5 322V353M357.5 328V343M358.5 331V339M359.5 331V337M360.5 332V337M361.5 332V336M362.5 332V335M363.5 332V335M364.5 332V335M365.5 333V335M366.5 333V335M375.5 333V335M376.5 332V337M377.5 329V346M378.5 331V339M379.5 330V336M380.5 328V340M381.5 320V353M382.5 320V353M383.5 327V342M384.5 329V338M385.5 329V337M386.5 330V338M387.5 330V338M388.5 328V340M389.5 330V338M390.5 330V337M391.5 330V337M392.5 330V337M393.5 331V336M394.5 332V335M413.5 325V341M414.5 321V349M415.5 319V352M416.5 320V348M417.5 320V350M418.5 316V352M419.5 315V354M420.5 317V351M421.5 317V351M422.5 319V351M423.5 315V351M424.5 320V350M425.5 316V347M426.5 317V351M427.5 319V349M428.5 317V352M429.5 318V349M430.5 318V349M431.5 322V348M432.5 317V350M433.5 320V351M434.5 321V349M435.5 319V350M436.5 320V347M437.5 324V350M438.5 324V345M439.5 322V349M440.5 322V349M441.5 320V349M442.5 323V345M443.5 324V345M444.5 322V344M445.5 322V343M446.5 324V347M447.5 320V346M448.5 320V342M449.5 326V344M450.5 326V344M451.5 321V347M452.5 323V347M453.5 320V345M454.5 323V345M455.5 321V344M456.5 325V344M457.5 321V345M458.5 322V344M459.5 322V344M460.5 327V342M461.5 323V343M462.5 324V342M463.5 326V341M464.5 325V344M465.5 322V344M466.5 323V344M467.5 327V343M468.5 323V345M469.5 323V345M470.5 326V345M471.5 323V342M472.5 323V344M473.5 327V341M474.5 324V340M475.5 327V341M476.5 326V342M477.5 324V344M478.5 327V340M479.5 327V340M480.5 325V342M481.5 327V340M482.5 324V343M483.5 327V342M484.5 325V343M485.5 327V342M486.5 327V342M487.5 326V341M488.5 326V341M489.5 325V342M490.5 325V342M491.5 328V338M492.5 328V338M493.5 327V340M494.5 326V339M495.5 327V341M496.5 327V341M497.5 328V341M498.5 328V341M499.5 328V340M500.5 327V340M501.5 329V338M502.5 326V340M503.5 327V340M504.5 327V340M505.5 328V340M506.5 327V338M507.5 327V338M508.5 328V338M509.5 327V339M510.5 329V340M511.5 331V337M515.5 332V335M516.5 331V336M517.5 331V336M518.5 328V340M519.5 315V353M520.5 325V342M521.5 329V339M522.5 330V337M523.5 330V337M524.5 331V336M525.5 331V335M526.5 332V335M527.5 332V335M528.5 332V335M529.5 332V335M545.5 333V335M546.5 333V335M547.5 332V336M548.5 331V340M549.5 325V354M550.5 330V342M551.5 331V338M552.5 332V336M553.5 332V336M554.5 332V336M555.5 332V335M556.5 332V335M557.5 332V336M558.5 329V340M559.5 319V354M560.5 327V343M561.5 330V339M562.5 330V337M563.5 331V337M564.5 332V336M565.5 332V336M566.5 332V335M567.5 332V335M568.5 332V335M586.5 332V335M587.5 331V337M588.5 332V335M596.5 332V335M597.5 330V337M598.5 332V336M599.5 332V335M624.5 330V337M625.5 328V341M626.5 327V342M627.5 327V341M628.5 324V346M629.5 324V341M630.5 321V352M631.5 323V346M632.5 323V346M633.5 326V342M634.5 325V344M635.5 324V347M636.5 322V347M637.5 324V343M638.5 323V345M639.5 326V343M640.5 323V347M641.5 323V345M642.5 323V345M643.5 322V345M644.5 322V345M645.5 323V345M646.5 322V346M647.5 326V345M648.5 322V343M649.5 325V341M650.5 323V344M651.5 323V346M652.5 323V346M653.5 324V341M654.5 327V342M655.5 324V346M656.5 324V344M657.5 326V346M658.5 323V343M659.5 324V342M660.5 323V343M661.5 323V343M662.5 324V344M663.5 327V344M664.5 325V342M665.5 327V347M666.5 324V345M667.5 327V344M668.5 326V344M669.5 326V343M670.5 323V347M671.5 323V347M672.5 324V344M673.5 322V346M674.5 324V343M675.5 326V344M676.5 325V347M677.5 324V346M678.5 324V343M679.5 323V344M680.5 324V345M681.5 324V345M682.5 324V346M683.5 323V347M684.5 326V346M685.5 326V347M686.5 324V346M687.5 324V345M688.5 323V347M689.5 324V341M690.5 324V341M691.5 323V347M692.5 325V346M693.5 322V345M694.5 323V345M695.5 324V345M696.5 323V346M697.5 326V340M698.5 329V341M699.5 331V337M700.5 331V337M723.5 332V335M724.5 330V337M725.5 321V345M726.5 327V339M727.5 330V338M728.5 331V337M729.5 331V337M730.5 331V336M731.5 325V341M732.5 330V339M733.5 330V337M734.5 331V336M735.5 332V335M736.5 328V338M737.5 330V337M738.5 330V337M739.5 331V336M740.5 331V335M741.5 332V335M761.5 331V336M762.5 332V335M765.5 332V336M766.5 329V339M767.5 329V339M768.5 318V353M769.5 325V343M770.5 328V340M771.5 325V345M772.5 329V339M773.5 331V337M774.5 331V336M775.5 332V335M776.5 332V335M777.5 332V335M778.5 332V335M797.5 331V336M798.5 330V339M799.5 331V337M800.5 331V336M801.5 332V335M802.5 333V335M803.5 332V335M804.5 331V337M805.5 326V341M806.5 326V341M807.5 329V338M808.5 329V337M809.5 330V336M810.5 332V335M811.5 331V336M812.5 328V340M813.5 331V337M814.5 330V336M815.5 330V336M816.5 331V335M817.5 332V335" stroke="#1f9a1f" stroke-width="1"/>
 <path d="M208.5 330V336M209.5 330V336M210.5 329V338M211.5 330V338M212.5 331V336M213.5 332V335M215.5 332V335M237.5 330V338M238.5 330V338M239.5 328V341M240.5 329V338M241.5 329V339M242.5 329V337M243.5 331V337M244.5 331V337M245.5 331V336M246.5 332V336M247.5 332V335M248.5 332V335M269.5 332V335M270.5 329V337M271.5 326V338M272.5 330V338M273.5 330V338M274.5 330V336M275.5 331V335M276.5 331V335M277.5 331V335M278.5 332V335M304.5 332V335M305.5 332V335M306.5 331V336M307.5 331V335M308.5 332V335M319.5 331V336M320.5 331V336M321.5 332V335M341.5 331V336M342.5 331V336M343.5 331V335M344.5 331V335M345.5 332V335M356.5 331V336M357.5 332V336M358.5 332V335M379.5 332V335M380.5 330V336M381.5 330V337M382.5 330V337M383.5 330V336M384.5 329V336M385.5 331V335M386.5 331V335M387.5 330V338M388.5 330V336M389.5 332V336M390.5 332V336M391.5 332V336M392.5 332V336M393.5 332V335M413.5 330V337M414.5 325V339M415.5 326V339M416.5 325V341M417.5 326V340M418.5 326V341M419.5 326V339M420.5 327V342M421.5 327V342M422.5 326V341M423.5 326V341M424.5 326V339M425.5 326V341M426.5 327V342M427.5 325V340M428.5 328V341M429.5 326V341M430.5 326V341M431.5 327V341M432.5 326V339M433.5 326V341M434.5 327V340M435.5 327V341M436.5 327V340M437.5 328V340M438.5 326V339M439.5 328V340M440.5 328V340M441.5 328V339M442.5 329V338M443.5 327V340M444.5 328V340M445.5 328V338M446.5 329V339M447.5 327V338M448.5 327V339M449.5 327V339M450.5 327V339M451.5 329V338M452.5 327V338M453.5 329V338M454.5 329V338M455.5 329V339M456.5 330V338M457.5 329V339M458.5 329V337M459.5 329V337M460.5 329V337M461.5 329V338M462.5 328V338M463.5 328V338M464.5 330V339M465.5 330V338M466.5 330V337M467.5 330V338M468.5 329V338M469.5 329V338M470.5 329V338M471.5 328V337M472.5 329V338M473.5 329V338M474.5 330V337M475.5 329V337M476.5 329V338M477.5 330V338M478.5 329V338M479.5 329V338M480.5 329V337M481.5 330V336M482.5 330V337M483.5 330V337M484.5 331V337M485.5 330V337M486.5 330V337M487.5 329V337M488.5 329V337M489.5 330V337M490.5 331V337M491.5 330V337M492.5 331V337M493.5 330V337M494.5 330V336M495.5 331V337M496.5 331V337M497.5 330V336M498.5 330V336M499.5 330V337M500.5 330V336M501.5 330V337M502.5 330V337M503.5 331V336M504.5 331V337M505.5 331V337M506.5 331V337M507.5 331V337M508.5 330V337M509.5 331V337M510.5 330V336M511.5 332V335M520.5 331V335M521.5 332V335M548.5 332V335M549.5 331V336M550.5 331V335M551.5 332V335M558.5 332V335M559.5 331V336M560.5 331V336M561.5 332V335M587.5 332V335M588.5 332V335M598.5 332V335M624.5 332V335M625.5 331V336M626.5 329V336M627.5 330V338M628.5 329V338M629.5 328V338M630.5 328V338M631.5 330V339M632.5 330V339M633.5 328V339M634.5 329V338M635.5 330V339M636.5 330V337M637.5 328V338M638.5 329V339M639.5 328V338M640.5 328V338M641.5 330V338M642.5 330V338M643.5 330V338M644.5 329V338M645.5 329V339M646.5 329V338M647.5 330V337M648.5 328V339M649.5 330V338M650.5 329V337M651.5 328V338M652.5 328V338M653.5 330V338M654.5 328V338M655.5 328V338M656.5 328V339M657.5 329V338M658.5 328V338M659.5 328V339M660.5 329V337M661.5 329V337M662.5 329V338M663.5 330V337M664.5 330V339M665.5 329V337M666.5 330V338M667.5 329V339M668.5 328V338M669.5 328V338M670.5 329V337M671.5 329V337M672.5 329V338M673.5 329V339M674.5 329V337M675.5 329V337M676.5 329V338M677.5 329V338M678.5 329V338M679.5 329V337M680.5 330V337M681.5 330V337M682.5 328V339M683.5 330V337M684.5 330V338M685.5 330V337M686.5 330V338M687.5 329V339M688.5 329V337M689.5 329V338M690.5 329V338M691.5 329V338M692.5 329V337M693.5 329V337M694.5 328V339M695.5 329V337M696.5 330V337M697.5 330V337M698.5 331V337M699.5 332V335M700.5 332V335M725.5 331V337M726.5 331V338M727.5 331V336M728.5 331V335M729.5 331V335M730.5 332V335M731.5 331V336M732.5 331V337M733.5 331V335M734.5 332V335M736.5 331V336M737.5 332V336M738.5 332V336M739.5 332V336M740.5 332V335M766.5 332V335M767.5 332V335M768.5 330V336M769.5 329V338M770.5 330V337M771.5 330V336M772.5 331V336M773.5 332V336M774.5 332V335M797.5 332V335M798.5 331V337M799.5 332V336M800.5 332V335M804.5 331V336M805.5 330V336M806.5 330V336M807.5 331V336M808.5 331V336M809.5 332V335M810.5 332V335M811.5 332V335M812.5 331V336M813.5 331V336M814.5 332V335M815.5 332V335" stroke="#30f030" stroke-width="1"/>
 <path d="M309 312V355M471 312V355M794 312V355" stroke="#e01a1a" stroke-width="2.2"/>
 <path d="M419.5 311V356" stroke="#fff" stroke-width="2"/>
</svg>

<div class="lbl" style="left:210px;top:296px;font-size:11.6px">Use the mouse to manually scroll the waveform below or to pause playback</div>

<!-- Recording modes -->
<div class="grp" style="left:21px;top:364px;width:275px;height:191px"></div>
<div class="gt" style="left:27px;top:365px;height:21px">Recording modes</div>
<div class="radio on" style="left:33px;top:402px"></div>
<div class="radio" style="left:33px;top:426px"></div>
<div class="radio" style="left:33px;top:450px"></div>
<div class="radio" style="left:33px;top:474px"></div>
<div class="radio" style="left:33px;top:498px"></div>
<div class="lbl" style="left:52px;top:402px;transform:scaleX(.865);transform-origin:0 0">Append at the end</div>
<div class="lbl" style="left:52px;top:426px;transform:scaleX(.865);transform-origin:0 0">Insert at selected position</div>
<div class="lbl" style="left:52px;top:450px;transform:scaleX(.865);transform-origin:0 0">Overwrite from selected position</div>
<div class="lbl" style="left:52px;top:474px;transform:scaleX(.865);transform-origin:0 0">Delete after selected position and append</div>
<div class="lbl" style="left:52px;top:498px;transform:scaleX(.865);transform-origin:0 0">Mix from selected position</div>

<!-- Position markers -->
<div class="grp" style="left:304px;top:364px;width:209px;height:191px"></div>
<div class="gt" style="left:310px;top:365px;height:21px">Position markers</div>
<div class="abs" style="left:314px;top:410px;width:188px;height:94px;background:#fff;border-top:1px solid #c0c8d0"></div>
<div class="abs" style="left:318px;top:413px;font-size:11px;line-height:12.7px;color:#111;white-space:pre">Marker 1 00:00:02.972
Marker 2 00:00:07.069
Marker 3 00:00:15.173
Marker 4 00:00:19.676</div>
<div class="btn" style="left:314px;top:506px;width:60px;height:37px;--hy:7px;--bh:6px"><span style="top:9px">Add</span></div>
<div class="btn" style="left:377px;top:506px;width:60px;height:37px;--hy:7px;--bh:6px"><span style="top:9px">Go to</span></div>
<div class="btn" style="left:440px;top:506px;width:61px;height:37px;--hy:7px;--bh:6px"><span style="top:9px">Del</span></div>

<!-- Positions and selections -->
<div class="grp" style="left:521px;top:364px;width:298px;height:191px"></div>
<div class="gt" style="left:527px;top:365px;height:21px">Positions and selections</div>
<div class="lbl" style="left:533px;top:399px;font-size:11.3px">Recording duration</div>
<div class="lbl" style="left:533px;top:420px;font-size:11.3px">Recording position</div>
<div class="tx" style="left:670px;top:398px">00:00:23.87</div>
<div class="tx" style="left:670px;top:419px">00:00:00.00</div>
<div class="lbl" style="left:601px;top:448px">Begin</div>
<div class="lbl" style="left:673px;top:448px">End</div>
<div class="lbl" style="left:745px;top:448px">Duration</div>
<div class="lbl" style="left:534px;top:468px">Selection</div>
<div class="lbl" style="left:534px;top:488px">Visible</div>
<div class="tx" style="left:598px;top:467px">00:00:00.00</div>
<div class="tx" style="left:670px;top:467px">00:00:00.00</div>
<div class="tx" style="left:742px;top:467px">00:00:00.00</div>
<div class="tx" style="left:598px;top:487px">00:00:00.00</div>
<div class="tx" style="left:670px;top:487px">00:00:19.15</div>
<div class="tx" style="left:742px;top:487px">00:00:19.15</div>
<div class="btn" style="left:595px;top:506px;width:216px;height:38px;--hy:7px;--bh:6px"><span style="top:9px">Deselect</span></div>

<div class="lbl" style="left:24px;top:560px;font-size:10.8px;color:#e8ecf0">Status: Playing 00:05.731</div>

<!-- transport -->
<div class="btn" style="left:21px;top:579px;width:108px;height:44px;--hy:8.5px;--bh:6px"><div class="abs" style="left:42px;top:16px;width:22px;height:22px;border-radius:50%;background:#8c8c8c"></div></div>
<div class="abs" style="left:136px;top:579px;width:108px;height:44px;background:#07243a;border-radius:2px;box-shadow:0 0 2px 1px rgba(10,30,50,.6)"><div class="abs" style="left:2px;top:2px;width:104px;height:40px;border:1.6px solid #b4d8f2;border-radius:1px;background:radial-gradient(46% 2.2px at 50% 5.5px, rgba(235,248,255,.95) 0%, rgba(150,205,240,.6) 50%, rgba(40,130,200,0) 100%),radial-gradient(55% 45% at 50% 100%, rgba(40,170,235,.9) 0%, rgba(20,120,190,.5) 50%, rgba(10,90,150,0) 100%),linear-gradient(90deg, rgba(0,20,40,.45) 0%, rgba(0,0,0,0) 25%, rgba(0,0,0,0) 75%, rgba(0,20,40,.45) 100%),linear-gradient(#0e6eae 0%, #0a5a92 18%, #064a78 40%, #075282 70%, #0b68a4 100%)"><div class="abs" style="left:41.5px;top:14.5px;width:7px;height:18px;background:#fff"></div><div class="abs" style="left:51.5px;top:14.5px;width:6px;height:18px;background:#fff"></div></div></div>
<div class="btn" style="left:251px;top:579px;width:108px;height:44px;--hy:8.5px;--bh:6px"><div class="abs" style="left:43px;top:17px;width:20px;height:19px;background:#fff"></div></div>
<div class="btn" style="left:366px;top:579px;width:108px;height:44px;--hy:8.5px;--bh:6px"><svg class="abs" style="left:45px;top:17px" width="16" height="20"><rect x="0.7" y="0" width="3.6" height="20" fill="#fff"/><path d="M4.3 10L15 0V20Z" fill="#fff"/></svg></div>
<div class="btn" style="left:481px;top:579px;width:108px;height:44px;--hy:8.5px;--bh:6px"><svg class="abs" style="left:41px;top:16.5px" width="24" height="21"><path d="M0.5 10.2L12 0V20.4Z M12 10.2L23.5 0V20.4Z" fill="#fff"/></svg></div>
<div class="btn" style="left:596px;top:579px;width:108px;height:44px;--hy:8.5px;--bh:6px"><svg class="abs" style="left:41px;top:16.5px" width="24" height="21"><path d="M0.5 0L12 10.2L0.5 20.4Z M12 0L23.5 10.2L12 20.4Z" fill="#fff"/></svg></div>
<div class="btn" style="left:711px;top:579px;width:108px;height:44px;--hy:8.5px;--bh:6px"><svg class="abs" style="left:45px;top:17px" width="16" height="20"><path d="M0.8 0L11 10L0.8 20Z" fill="#fff"/><rect x="11" y="0" width="4.2" height="20" fill="#fff"/></svg></div>
</body></html>
